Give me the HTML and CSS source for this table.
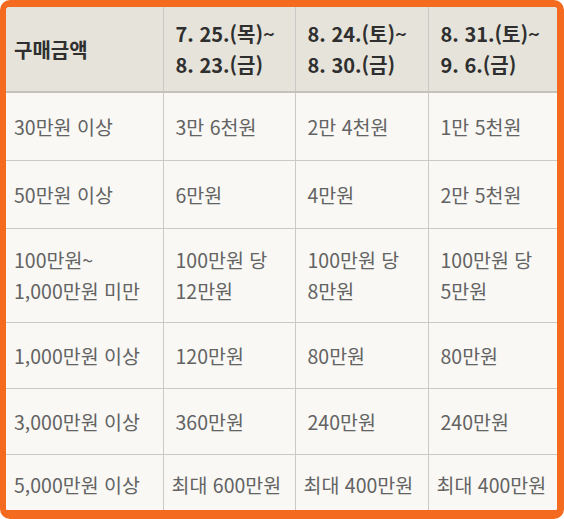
FILE: index.html
```html
<!DOCTYPE html>
<html lang="ko">
<head>
<meta charset="utf-8">
<link rel="stylesheet" href="styles.css">
</head>
<body>
<div class="frame">
  <table class="price">
    <colgroup>
      <col class="c1"><col class="c2"><col class="c3"><col class="c4">
    </colgroup>
    <thead>
      <tr class="head">
        <th>구매금액</th>
        <th>7. 25.(목)~<br>8. 23.(금)</th>
        <th>8. 24.(토)~<br>8. 30.(금)</th>
        <th>8. 31.(토)~<br>9. 6.(금)</th>
      </tr>
    </thead>
    <tbody>
      <tr class="r1"><td>30만원 이상</td><td>3만 6천원</td><td>2만 4천원</td><td>1만 5천원</td></tr>
      <tr class="r2"><td>50만원 이상</td><td>6만원</td><td>4만원</td><td>2만 5천원</td></tr>
      <tr class="r3"><td>100만원~<br>1,000만원 미만</td><td>100만원 당<br>12만원</td><td>100만원 당<br>8만원</td><td>100만원 당<br>5만원</td></tr>
      <tr class="r4"><td>1,000만원 이상</td><td>120만원</td><td>80만원</td><td>80만원</td></tr>
      <tr class="r5"><td>3,000만원 이상</td><td>360만원</td><td>240만원</td><td>240만원</td></tr>
      <tr class="r6"><td>5,000만원 이상</td><td class="tight">최대 600만원</td><td class="tight">최대 400만원</td><td class="tight">최대 400만원</td></tr>
    </tbody>
  </table>
</div>
</body>
</html>
```

FILE: styles.css
```css
html, body {
  margin: 0;
  padding: 0;
  background: #ffffff;
}

.frame {
  box-sizing: border-box;
  width: 564px;
  height: 519px;
  border-style: solid;
  border-color: #f46a1f;
  border-width: 7px 7px 9px 6px;
  border-radius: 10px;
  overflow: hidden;
  background: #f9f8f5;
}

.price {
  border-collapse: collapse;
  table-layout: fixed;
  width: 551px;
  font-family: "Noto Sans CJK KR", "Noto Sans", sans-serif;
}

.c1 { width: 157px; }
.c2 { width: 132px; }
.c3 { width: 133px; }
.c4 { width: 129px; }

.price th,
.price td {
  text-align: left;
  vertical-align: middle;
  padding: 0 4px 0 12px;
  line-height: 31px;
  border: 1px solid #c9c9c6;
  white-space: nowrap;
  overflow: visible;
}

.price th:first-child,
.price td:first-child {
  border-left: none;
  padding-left: 8px;
}

.price th:last-child,
.price td:last-child {
  border-right: none;
}

.price th {
  background: #e5e3da;
  color: #2f2f2f;
  font-size: 20px;
  font-weight: 700;
  border-top: none;
  border-bottom: 2px solid #c4c2b8;
}

.price td {
  background: #f9f8f5;
  color: #636363;
  font-size: 19.5px;
  font-weight: 400;
}

.price td.tight {
  padding-left: 8px;
}

.head { height: 85px; }
.r1 { height: 68px; }
.r2 { height: 68px; }
.r3 { height: 94px; }
.r4 { height: 66px; }
.r5 { height: 66px; }
.r6 { height: 60px; }

.r6 td {
  border-bottom: none;
}
```
